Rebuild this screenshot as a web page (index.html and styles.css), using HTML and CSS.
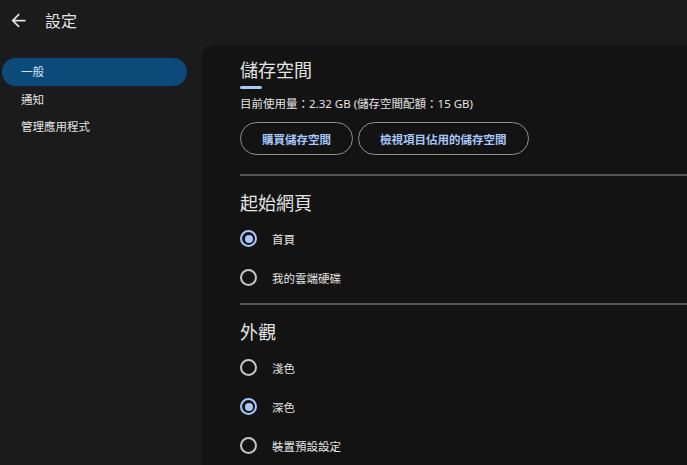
FILE: index.html
```html
<!DOCTYPE html>
<html lang="zh-Hant">
<head>
    <meta charset="UTF-8">
    <meta name="viewport" content="width=device-width, initial-scale=1.0">
    <title>設定</title>
    <link rel="stylesheet" href="styles.css">
</head>
<body>
    <div class="topbar">
        <svg class="back" viewBox="0 0 24 24"><path d="M20 11H7.83l5.59-5.59L12 4l-8 8 8 8 1.41-1.41L7.83 13H20v-2z" fill="#e3e3e3"/></svg>
        <span class="page-title">設定</span>
    </div>
    <div class="layout">
        <ul class="sidebar">
            <li class="nav-item active">一般</li>
            <li class="nav-item">通知</li>
            <li class="nav-item">管理應用程式</li>
        </ul>
        <div class="panel">
            <h2>儲存空間</h2>
            <div class="bar"></div>
            <p class="usage">目前使用量：2.32 GB (儲存空間配額：15 GB)</p>
            <div class="buttons">
                <button>購買儲存空間</button>
                <button>檢視項目佔用的儲存空間</button>
            </div>
            <hr>
            <h2 class="section">起始網頁</h2>
            <label class="option"><span class="radio checked"></span>首頁</label>
            <label class="option"><span class="radio"></span>我的雲端硬碟</label>
            <hr>
            <h2 class="section">外觀</h2>
            <label class="option"><span class="radio"></span>淺色</label>
            <label class="option"><span class="radio checked"></span>深色</label>
            <label class="option"><span class="radio"></span>裝置預設設定</label>
        </div>
    </div>
</body>
</html>
```

FILE: styles.css
```css
body {
    margin: 0;
    height: 465px;
    overflow: hidden;
    background-color: #1b1b1b;
    color: #e3e3e3;
    font-family: "Noto Sans", "Noto Sans CJK TC", sans-serif;
}

.topbar {
    height: 40px;
    display: flex;
    align-items: center;
    padding-left: 8px;
}

.back {
    width: 21px;
    height: 21px;
}

.page-title {
    margin-left: 16px;
    font-size: 16px;
}

.layout {
    display: flex;
}

.sidebar {
    width: 202px;
    flex-shrink: 0;
    margin: 0;
    padding: 18px 15px 0 2px;
    box-sizing: border-box;
    list-style: none;
}

.nav-item {
    height: 27px;
    line-height: 27px;
    padding-left: 19px;
    font-size: 11.5px;
    color: #e3e3e3;
}

.nav-item.active {
    height: 28px;
    line-height: 28px;
    border-radius: 14px;
    background-color: #0c4a79;
    color: #d3e3fd;
}

.panel {
    flex: 1;
    margin-top: 5px;
    height: 420px;
    padding: 13px 0 0 38px;
    background-color: #131313;
    border-top-left-radius: 12px;
}

h2 {
    margin: 0;
    font-size: 18px;
    line-height: 24px;
    font-weight: 400;
}

.bar {
    width: 22px;
    height: 3px;
    margin-top: 4px;
    border-radius: 2px;
    background-color: #a8c7fa;
}

.usage {
    margin: 7px 0 0;
    font-size: 11.5px;
    line-height: 16px;
}

.buttons {
    display: flex;
    gap: 5px;
    margin-top: 10px;
}

button {
    height: 33px;
    padding: 0 21px;
    border: 1px solid #8e918f;
    border-radius: 17px;
    background: transparent;
    color: #a8c7fa;
    font-family: inherit;
    font-size: 11.5px;
    font-weight: 700;
}

hr {
    margin: 19px 0 0;
    border: none;
    height: 2px;
    background-color: #555;
}

h2.section {
    margin-top: 15px;
}

.option {
    display: flex;
    align-items: center;
    height: 39px;
    font-size: 11.5px;
}

h2 + .option {
    margin-top: 4px;
}

.option + hr {
    margin-top: 6px;
}

.radio {
    width: 13px;
    height: 13px;
    margin-right: 15px;
    border: 2px solid #c4c7c5;
    border-radius: 50%;
    position: relative;
}

.radio.checked {
    border-color: #a8c7fa;
}

.radio.checked::after {
    content: "";
    position: absolute;
    top: 2.5px;
    left: 2.5px;
    width: 8px;
    height: 8px;
    border-radius: 50%;
    background-color: #a8c7fa;
}
```
